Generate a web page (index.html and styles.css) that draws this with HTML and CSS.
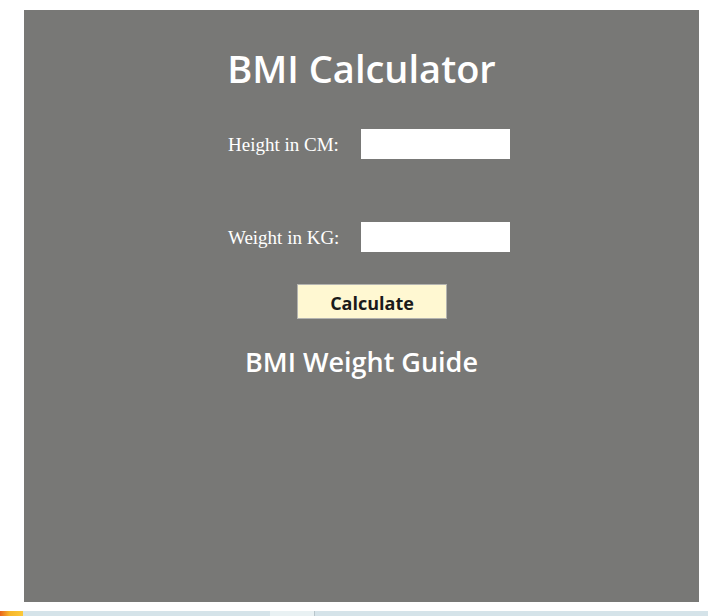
FILE: index.html
```html
<!DOCTYPE html>
<html>
<head>
<meta charset="utf-8">
<title>BMI Calculator</title>
<link rel="stylesheet" href="styles.css">
</head>
<body>
<div class="page">
  <h1 class="title">BMI Calculator</h1>
  <div class="form">
    <div class="row">
      <label class="label" for="h">Height in CM:</label>
      <input class="field" id="h" type="text">
    </div>
    <div class="row">
      <label class="label" for="w">Weight in KG:</label>
      <input class="field" id="w" type="text">
    </div>
  </div>
  <button class="btn" type="button">Calculate</button>
  <h2 class="guide">BMI Weight Guide</h2>
</div>
<div class="taskbar">
  <span class="tb-start"></span>
  <span class="tb-gap1"></span>
  <span class="tb-light"></span>
  <span class="tb-rest"></span>
</div>
</body>
</html>
```
FILE: styles.css
```css
html, body {
  margin: 0;
  padding: 0;
  background: #ffffff;
}
body {
  width: 708px;
  height: 616px;
  overflow: hidden;
  position: relative;
}
.page {
  margin: 10px 0 0 24px;
  width: 675px;
  height: 592px;
  background: #787876;
  display: flow-root;
}
.title {
  margin: 33px 0 0 0;
  text-align: center;
  font-family: "Open Sans", "Noto Sans", sans-serif;
  font-weight: 600;
  font-size: 38px;
  line-height: 50px;
  color: #ffffff;
}
.form {
  margin: 36px 0 0 204px;
  width: 282px;
  display: flex;
  flex-direction: column;
  gap: 63px;
}
.row {
  display: flex;
  align-items: center;
  justify-content: space-between;
  height: 30px;
}
.label {
  font-family: "Liberation Serif", "Times New Roman", serif;
  font-size: 19px;
  line-height: 22px;
  padding-top: 2px;
  color: #ffffff;
}
.field {
  width: 149px;
  height: 30px;
  box-sizing: border-box;
  border: none;
  background: #ffffff;
  padding: 0 4px;
  margin: 0;
}
.btn {
  display: block;
  margin: 32px 0 0 273px;
  width: 150px;
  height: 35px;
  box-sizing: border-box;
  background: #fff8d2;
  border: 1px solid #b4b4b0;
  font-family: "Open Sans", "Noto Sans", sans-serif;
  font-weight: 700;
  font-size: 18px;
  line-height: 24px;
  padding: 2px 0 0 0;
  color: #1a1a1a;
}
.guide {
  margin: 26px 0 0 0;
  text-align: center;
  font-family: "Open Sans", "Noto Sans", sans-serif;
  font-weight: 600;
  font-size: 27px;
  line-height: 34px;
  color: #ffffff;
}
.taskbar {
  position: absolute;
  left: 0;
  bottom: 0;
  width: 708px;
  height: 5px;
  display: flex;
  background: #d5e3e9;
}
.tb-start {
  width: 23px;
  background: linear-gradient(90deg, #e8641c, #f7b52a 40%, #fbc93a);
}
.tb-gap1 {
  width: 247px;
}
.tb-light {
  width: 44px;
  background: #e9f1f3;
  border-right: 1px solid #b9c6cc;
}
.tb-rest {
  flex: 1;
}
```
